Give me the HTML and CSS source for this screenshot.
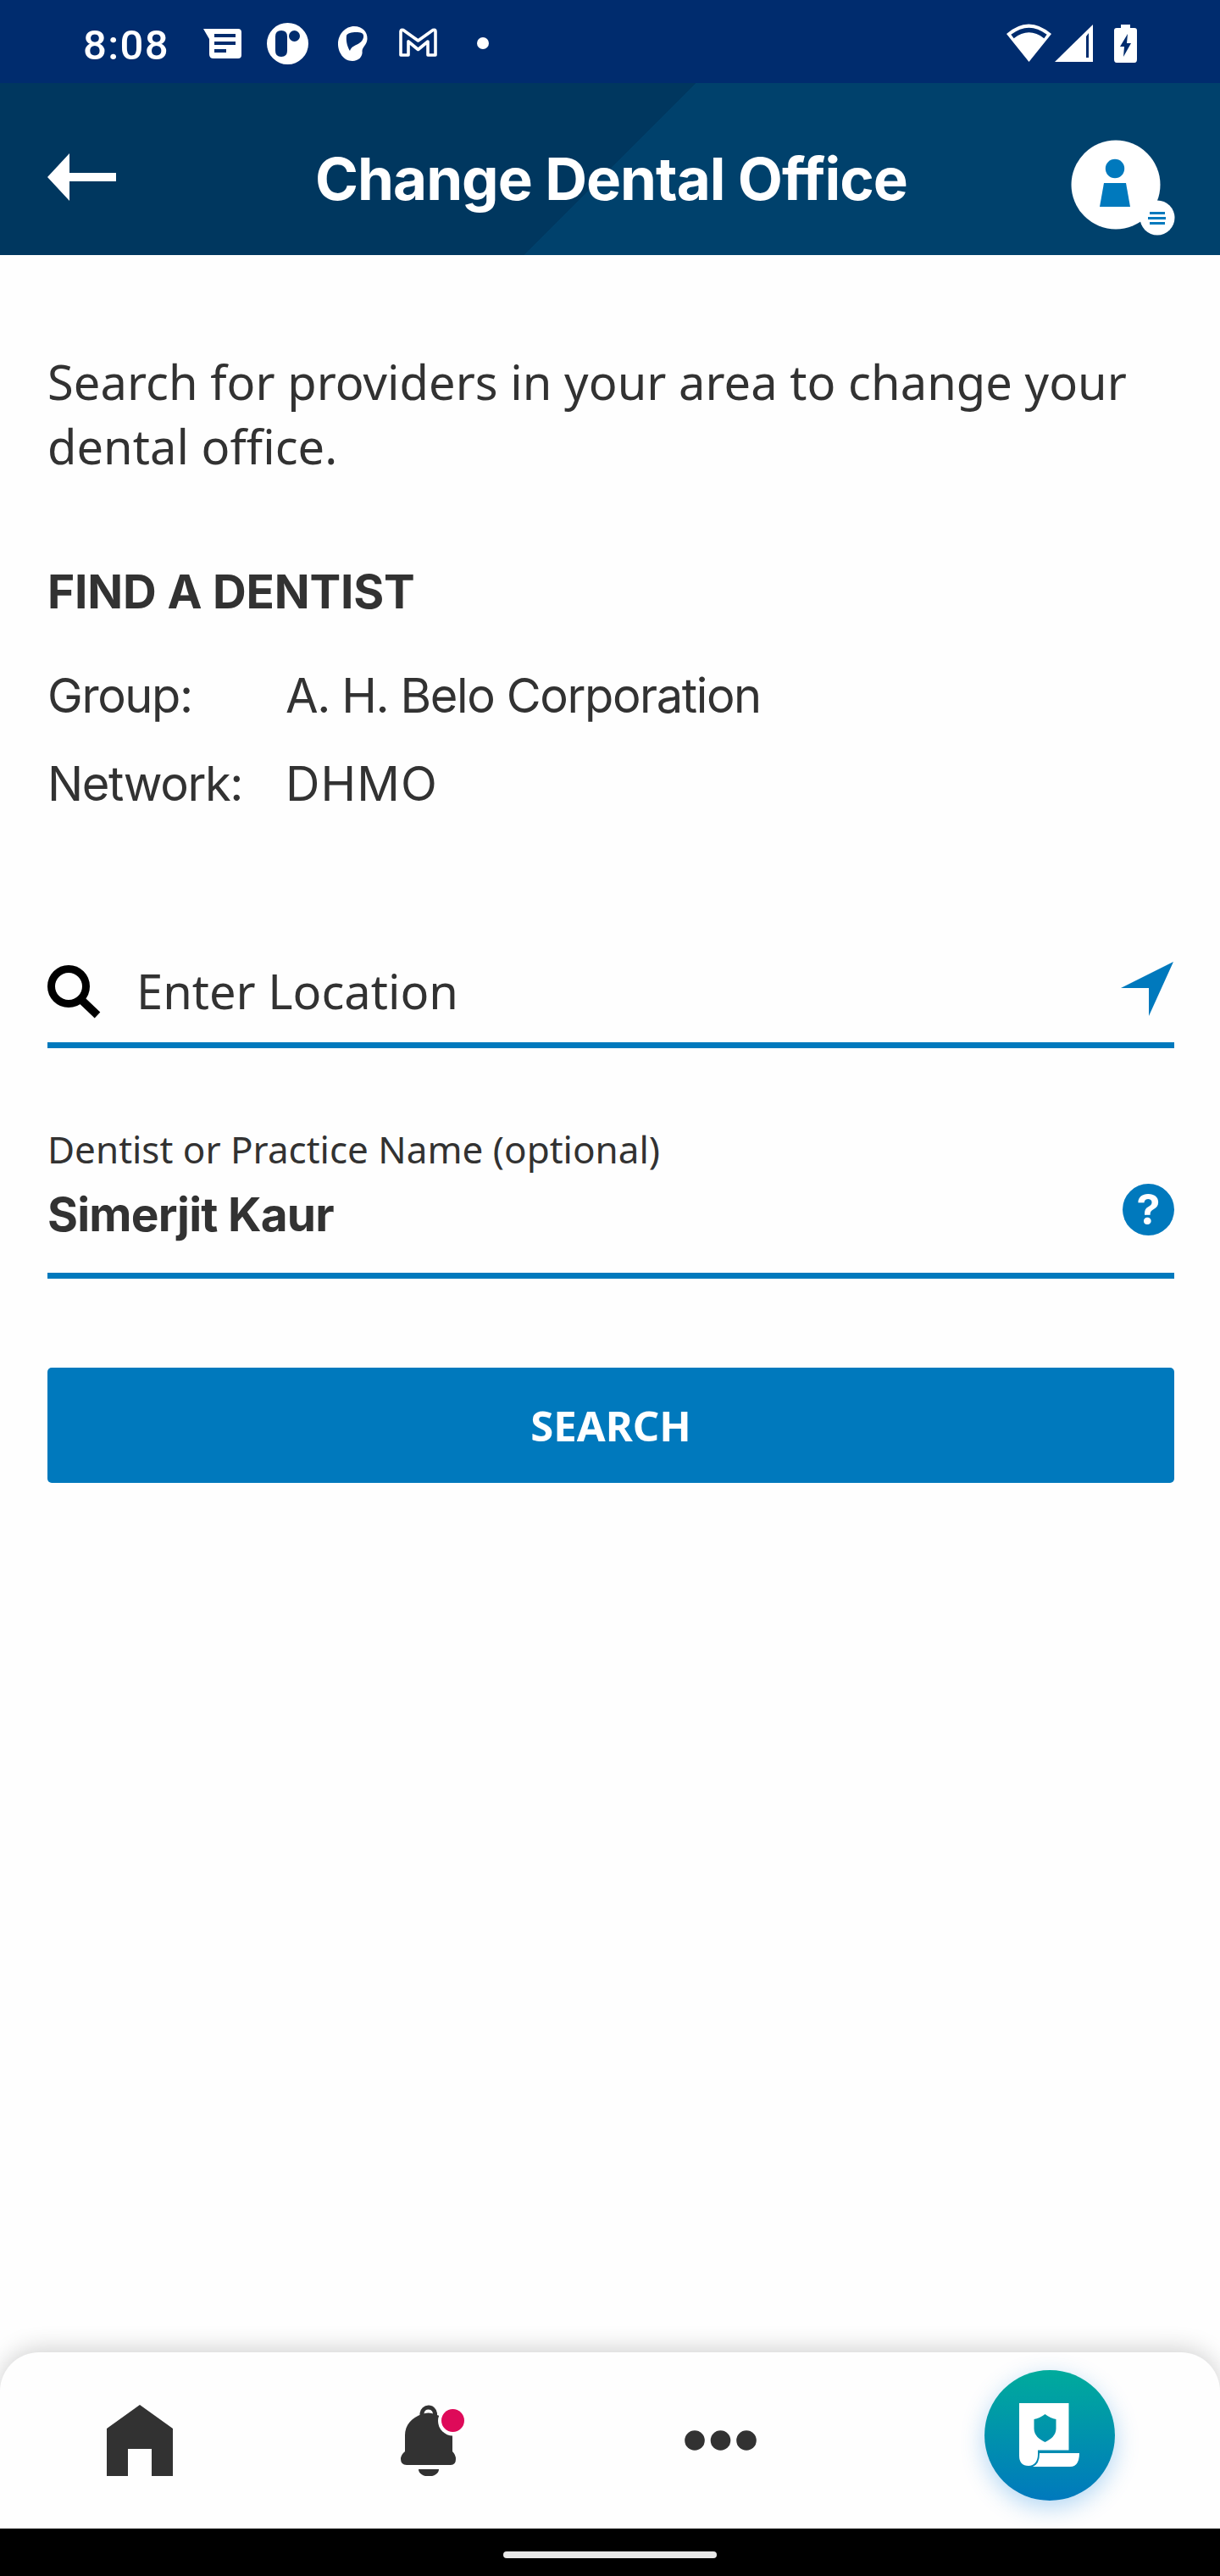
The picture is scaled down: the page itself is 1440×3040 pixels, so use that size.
FILE: index.html
```
<!DOCTYPE html>
<html lang="en">
<head>
<meta charset="utf-8">
<title>Change Dental Office</title>
<link rel="stylesheet" href="styles.css">
</head>
<body>
<div class="screen">
  <div class="status">
    <span class="time">8:08</span>
    <svg class="status-left" width="350" height="98" viewBox="230 0 350 98" fill="#fff">
      <path fill-rule="evenodd" d="M240 34H281Q285 34 285 38V65Q285 69 281 69H252Q247 69 247 64V46ZM253 40V44H278V40ZM253 49V53H278V49ZM253 58V62H267V58Z"/>
      <path fill-rule="evenodd" d="M339.500 27A24.500 24.500 0 1 0 339.500 76A24.500 24.500 0 1 0 339.500 27ZM325 43Q325 36 332 36Q339 36 339 43V60Q339 67 332 67Q325 67 325 60ZM347.500 36A6.500 6.500 0 1 1 347.500 49A6.500 6.500 0 1 1 347.500 36Z"/>
      <path fill-rule="evenodd" d="M418 31C428 31 434 38 433.500 46C433 53 428 55 427.500 60C428.500 67 423 72 416 72C405 72 399 61 399 52C399 40 408 31 418 31ZM409 42C408 50 411 57 413 60C415 54 420 54 424 51C429 48 431 41 427 39C422 37 410 38 409 42Z"/>
      <path d="M473 65V37Q473.500 34.500 476 35.500L493.500 48L511 35.500Q514 34.500 514 37V65H505V49L493.500 58.500L482 49V65Z" fill="none" stroke="#fff" stroke-width="3.600" stroke-linejoin="round"/>
      <circle cx="570" cy="51" r="7"/>
    </svg>
    <svg class="status-right" width="170" height="98" viewBox="1180 0 170 98">
      <path fill="#fff" d="M1188 40Q1214 17 1241 40L1214.500 73Z"/>
      <path fill="none" stroke="#002c6e" stroke-width="5.500" d="M1195 43Q1214.500 28 1234 43"/>
      <path fill="#fff" d="M1290 29V73H1245Z"/>
      <path fill="#002c6e" d="M1282 43L1285 39V68H1282Z"/>
      <path fill="#fff" d="M1323 29H1334V33H1339Q1342 33 1342 36V70Q1342 74 1339 74H1318Q1315 74 1315 70V36Q1315 33 1318 33H1323Z"/>
      <path fill="#002c6e" d="M1331 40L1322 55H1327L1326 67L1335 51H1330Z"/>
    </svg>
  </div>
  <header class="header">
    <svg class="back" width="82" height="58" viewBox="0 0 82 58" fill="#fff"><path d="M0 29L26 1V24H81V34H26V57Z"/></svg>
    <h1 class="title">Change Dental Office</h1>
    <svg class="avatar" width="124" height="116" viewBox="1263 164 124 116">
      <circle cx="1317" cy="218" r="52.500" fill="#fff"/>
      <circle cx="1366" cy="257" r="20.500" fill="#fff"/>
      <circle cx="1316" cy="199" r="11.200" fill="#0079bd"/>
      <path fill="#0079bd" d="M1303 216H1329L1334 244H1298Z"/>
      <path stroke="#0079bd" stroke-width="3" d="M1357 251.500H1375M1355 257.500H1376M1357 263.500H1375"/>
    </svg>
  </header>
  <main class="main">
    <p class="intro">Search for providers in your area to change your dental office.</p>
    <h2 class="section">FIND A DENTIST</h2>
    <dl class="facts">
      <dt>Group:</dt><dd>A. H. Belo Corporation</dd>
      <dt>Network:</dt><dd class="network">DHMO</dd>
    </dl>
    <div class="field location">
      <svg class="search-icon" width="63" height="63" viewBox="0 0 63 63"><circle cx="25" cy="25" r="20.500" fill="none" stroke="#000" stroke-width="9"/><path d="M38 39L59 59" stroke="#000" stroke-width="9.500"/></svg>
      <span class="placeholder">Enter Location</span>
      <svg class="locate" width="63" height="64" viewBox="0 0 63 64"><path fill="#0079bd" d="M62 0L33 64V31H0Z"/></svg>
    </div>
    <div class="field dentist">
      <div class="dentist-text">
        <label class="label">Dentist or Practice Name (optional)</label>
        <span class="value">Simerjit Kaur</span>
      </div>
      <span class="help">?</span>
    </div>
    <button class="search">SEARCH</button>
  </main>
  <nav class="nav">
    <svg class="home" width="78" height="84" viewBox="0 0 78 84"><path fill="#323232" d="M39 0L78 28V84H53V52H25V84H0V28Z"/></svg>
    <svg class="bell" width="80" height="84" viewBox="472 2838 80 84">
      <path fill="none" stroke="#323232" stroke-width="5" d="M498 2852V2848A7.800 7.800 0 0 1 513.500 2848V2852"/>
      <path fill="#323232" d="M498 2849Q505.500 2846 513 2849C527 2853 534 2863 534 2876V2893Q538 2897 538 2902Q538 2909 532 2909H480Q473 2909 473 2902Q473 2897 478 2893V2874C478 2862 486 2853 498 2849Z"/>
      <path fill="#323232" d="M494 2914H518A12 8.500 0 0 1 494 2914Z"/>
      <circle cx="534.500" cy="2857" r="17.500" fill="#fff"/>
      <circle cx="534.500" cy="2856.500" r="13.500" fill="#de0a59"/>
    </svg>
    <svg class="more" width="86" height="24" viewBox="0 0 86 24" fill="#323232"><circle cx="12" cy="12" r="11.800"/><circle cx="42.500" cy="12" r="11.800"/><circle cx="73" cy="12" r="11.800"/></svg>
    <div class="fab">
      <svg width="154" height="154" viewBox="1162 2797 154 154">
        <path fill="#fff" fill-rule="evenodd" d="M1203 2836H1261.500V2891.500H1225V2897C1225 2904 1221 2910 1214 2910Q1203 2910 1203 2898ZM1233.500 2849Q1227 2854 1220.500 2855V2866C1220.500 2874 1227 2879 1233.500 2882C1240 2879 1246.500 2874 1246.500 2866V2855Q1240 2854 1233.500 2849Z"/>
        <path fill="#fff" d="M1227 2895H1274Q1274 2911 1263 2911H1219Q1227 2908 1227 2895Z"/>
      </svg>
    </div>
  </nav>
  <div class="gesture"><span class="pill"></span></div>
</div>
</body>
</html>
```
FILE: styles.css
```
* { box-sizing: border-box; margin: 0; padding: 0; }
body { background: #fff; }
.screen { width: 1440px; height: 3040px; display: flex; flex-direction: column; background: #fefefe; color: #323232; overflow: hidden; }
.status { height: 98px; background: #002c6e; display: flex; align-items: center; padding: 0 90px 0 98px; }
.time { width: 132px; font: 500 49px/60px Roboto, sans-serif; letter-spacing: 1.4px; color: #fff; padding-top: 9px; white-space: nowrap; }
.status-right { margin-left: auto; }
.header { height: 203px; background: linear-gradient(135deg, #00375f 0, #00375f 50%, #00416c 50%); display: grid; grid-template-columns: 124px 1fr 124px; align-items: start; padding: 0 53px 0 56px; }
.back { margin-top: 82px; }
.title { font: 700 69px/84px Inter, sans-serif; letter-spacing: -1px; color: #fff; margin-top: 71px; text-align: center; white-space: nowrap; }
.avatar { margin-top: 66px; }
.main { flex: 1; padding: 111px 54px 0 56px; }
.intro { font: 400 56px/76px "Noto Sans", sans-serif; letter-spacing: 0.05px; height: 152px; }
.section { font: 700 55px/66px Inter, sans-serif; letter-spacing: -0.2px; margin-top: 101px; white-space: nowrap; }
.facts { display: grid; grid-template-columns: 281px 1fr; grid-auto-rows: 104px; margin-top: 38px; font: 400 56px/104px Inter, sans-serif; letter-spacing: -1.4px; white-space: nowrap; }
.network { letter-spacing: 1.1px; }
.field { display: flex; border-bottom: 7px solid #0079bd; }
.location { height: 122px; margin-top: 138px; align-items: flex-start; }
.search-icon { margin-top: 24px; }
.placeholder { font: 400 56px/76px "Noto Sans", sans-serif; margin: 16px 0 0 42px; }
.locate { margin: 20px 0 0 auto; }
.dentist { height: 192px; margin-top: 80px; justify-content: space-between; }
.dentist-text { display: flex; flex-direction: column; }
.label { font: 400 44px/60px "Noto Sans", sans-serif; margin-top: 9px; }
.value { font: 700 55px/66px Inter, sans-serif; letter-spacing: -0.8px; margin-top: 14px; white-space: nowrap; }
.help { width: 61px; height: 61px; border-radius: 50%; background: #0079bd; color: #fff; font: 700 50px/61px Inter, sans-serif; text-align: center; margin-top: 80px; }
.search { display: block; width: 1330px; height: 136px; margin-top: 105px; border: 0; border-radius: 5px; background: #0079bd; color: #fff; font: 700 49px/66px "Noto Sans", sans-serif; }
.nav { height: 208px; background: #fefefe; border-radius: 46px 46px 0 0; box-shadow: 0 -4px 28px rgba(0,0,0,.18); display: grid; grid-template-columns: 346px 336px 354px 154px; align-items: start; padding: 0 124px 0 126px; }
.home, .bell { margin-top: 62px; }
.more { margin-top: 92px; }
.fab { width: 154px; height: 154px; margin-top: 21px; border-radius: 50%; background: linear-gradient(#00ab9c, #0079bd); box-shadow: 0 8px 28px rgba(0,121,220,.3); }
.fab svg { display: block; }
.gesture { height: 56px; background: #000; display: flex; justify-content: center; align-items: flex-start; padding-top: 27px; z-index: 1; }
.pill { width: 252px; height: 8px; border-radius: 4px; background: #e8e8e8; }
```
